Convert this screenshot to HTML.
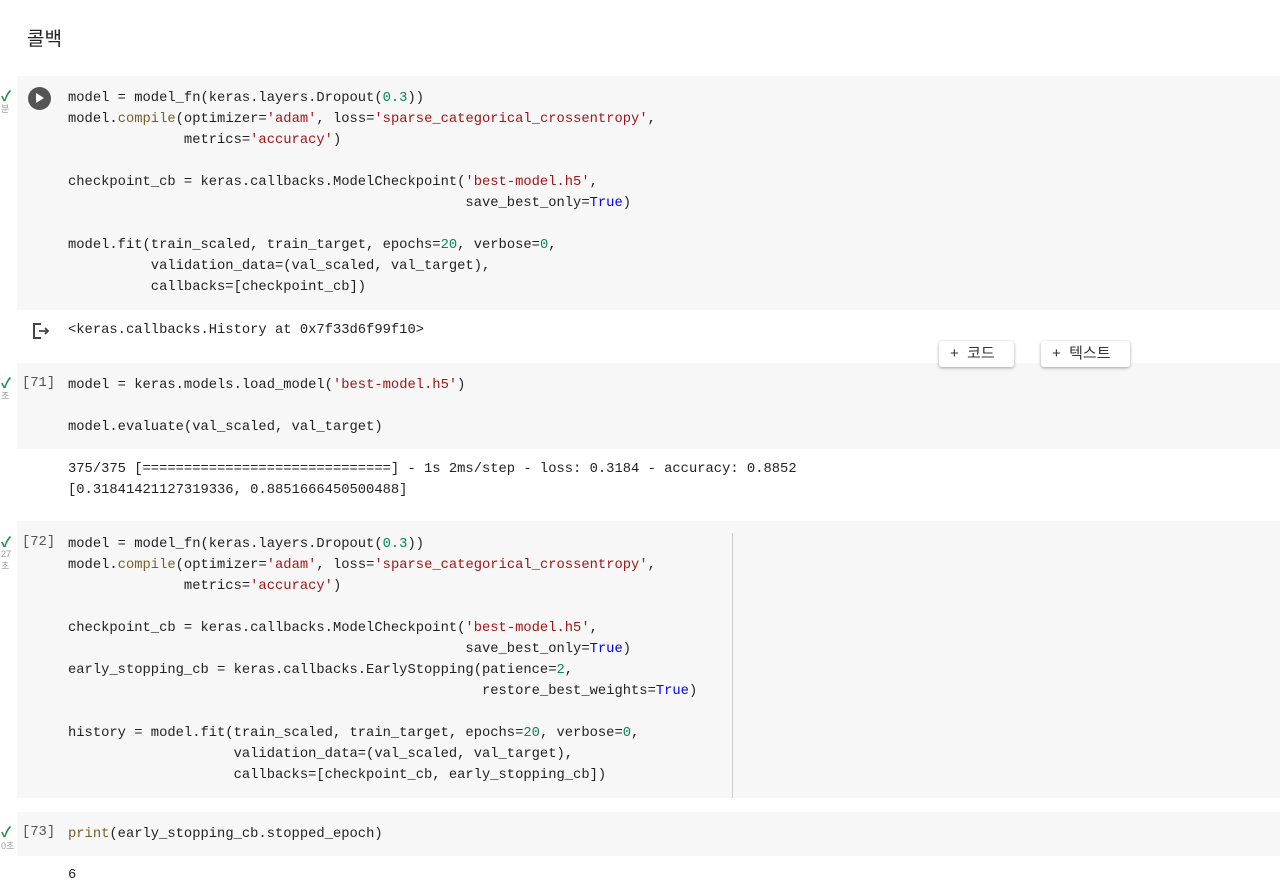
<!DOCTYPE html><html><head><meta charset="utf-8"><style>
body{margin:0;width:1280px;height:880px;background:#fff;font-family:"Liberation Sans","Noto Sans CJK KR",sans-serif;position:relative;overflow:hidden}
.t{position:absolute;left:27px;top:24px;font-size:19px;color:#222}
.cell{position:absolute;left:17px;right:0;background:#f7f7f7}
pre{margin:0;font-family:"Liberation Mono","NanumGothic",monospace;font-size:13.8px;line-height:21px;color:#222;position:absolute;left:68px}
.f{color:#795e26}.s{color:#a31515}.n{color:#098658}.k{color:#0000ff}
.num{position:absolute;left:22px;font-family:"Liberation Mono",monospace;font-size:13.8px;color:#555}
.chk{position:absolute;left:1px;color:#1e8e3e;font-size:14px;font-weight:bold}
.sm{position:absolute;left:1px;font-size:9px;color:#999}
.btn{position:absolute;top:341px;height:26px;background:#fff;border-radius:3px;box-shadow:0 1px 3px rgba(0,0,0,.35);font-size:15px;color:#333;line-height:25px;box-sizing:border-box;padding-left:11px}
</style></head><body>
<div class="t">콜백</div>

<div class="cell" style="top:76px;height:234px"></div>
<div class="chk" style="top:86px">✓</div><div class="sm" style="top:102px">분</div>
<div style="position:absolute;left:28px;top:87px;width:23px;height:23px;border-radius:50%;background:#555"></div>
<div style="position:absolute;left:36px;top:93px;width:0;height:0;border-left:8px solid #fff;border-top:5.5px solid transparent;border-bottom:5.5px solid transparent"></div>
<pre style="top:88px">model = model_fn(keras.layers.Dropout(<span class="n">0.3</span>))
model.<span class="f">compile</span>(optimizer=<span class="s">'adam'</span>, loss=<span class="s">'sparse_categorical_crossentropy'</span>,
              metrics=<span class="s">'accuracy'</span>)

checkpoint_cb = keras.callbacks.ModelCheckpoint(<span class="s">'best-model.h5'</span>,
                                                save_best_only=<span class="k">True</span>)

model.fit(train_scaled, train_target, epochs=<span class="n">20</span>, verbose=<span class="n">0</span>,
          validation_data=(val_scaled, val_target),
          callbacks=[checkpoint_cb])</pre>
<svg style="position:absolute;left:32px;top:322px" width="18" height="18" viewBox="0 0 18 18"><path d="M9 2H2v14h7" fill="none" stroke="#444" stroke-width="2"/><path d="M7 9h9M13 6l3 3-3 3" fill="none" stroke="#444" stroke-width="1.8"/></svg>
<pre style="top:320px">&lt;keras.callbacks.History at 0x7f33d6f99f10&gt;</pre>

<div class="cell" style="top:363px;height:86px"></div>
<div class="btn" style="left:939px;width:75px">+&nbsp;&nbsp;코드</div>
<div class="btn" style="left:1041px;width:89px">+&nbsp;&nbsp;텍스트</div>
<div class="chk" style="top:373px">✓</div><div class="sm" style="top:389px">조</div>
<div class="num" style="top:376px">[71]</div>
<pre style="top:375px">model = keras.models.load_model(<span class="s">'best-model.h5'</span>)

model.evaluate(val_scaled, val_target)</pre>
<pre style="top:459px">375/375 [==============================] - 1s 2ms/step - loss: 0.3184 - accuracy: 0.8852
[0.31841421127319336, 0.8851666450500488]</pre>

<div class="cell" style="top:521px;height:277px"></div>
<div style="position:absolute;left:732px;top:533px;width:1px;height:265px;background:#ccc"></div>
<div class="chk" style="top:532px">✓</div><div class="sm" style="top:549px">27<br>초</div>
<div class="num" style="top:535px">[72]</div>
<pre style="top:534px">model = model_fn(keras.layers.Dropout(<span class="n">0.3</span>))
model.<span class="f">compile</span>(optimizer=<span class="s">'adam'</span>, loss=<span class="s">'sparse_categorical_crossentropy'</span>,
              metrics=<span class="s">'accuracy'</span>)

checkpoint_cb = keras.callbacks.ModelCheckpoint(<span class="s">'best-model.h5'</span>,
                                                save_best_only=<span class="k">True</span>)
early_stopping_cb = keras.callbacks.EarlyStopping(patience=<span class="n">2</span>,
                                                  restore_best_weights=<span class="k">True</span>)

history = model.fit(train_scaled, train_target, epochs=<span class="n">20</span>, verbose=<span class="n">0</span>,
                    validation_data=(val_scaled, val_target),
                    callbacks=[checkpoint_cb, early_stopping_cb])</pre>

<div class="cell" style="top:812px;height:44px"></div>
<div class="chk" style="top:822px">✓</div><div class="sm" style="top:839px">0초</div>
<div class="num" style="top:825px">[73]</div>
<pre style="top:824px"><span class="f">print</span>(early_stopping_cb.stopped_epoch)</pre>
<pre style="top:865px">6</pre>
</body></html>
